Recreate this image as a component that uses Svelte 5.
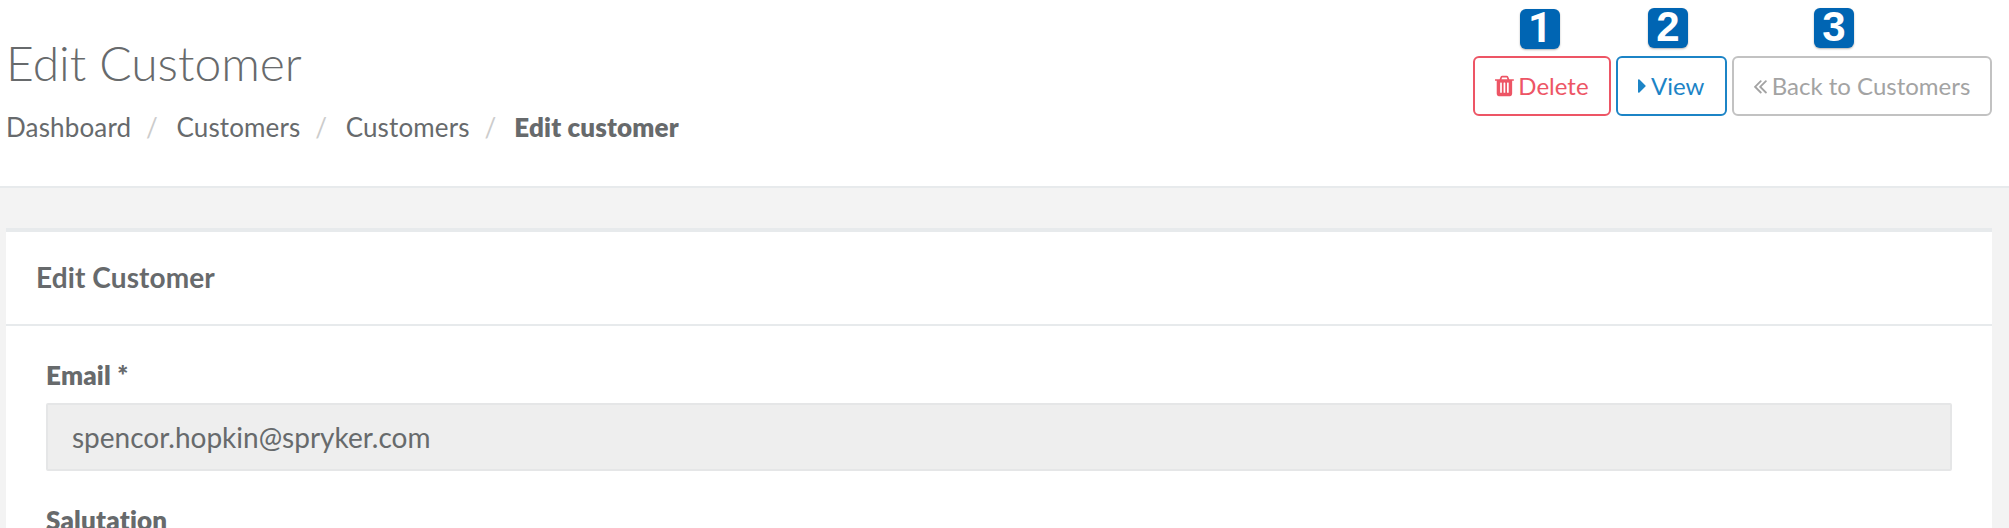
<script>
  const crumbs = ['Dashboard', 'Customers', 'Customers'];
  const actions = [
    {
      kind: 'danger', label: 'Delete', step: 1, box: '192 0 1408 1792', width: 18.86,
      path: 'M704 1376v-704q0-14-9-23t-23-9h-64q-14 0-23 9t-9 23v704q0 14 9 23t23 9h64q14 0 23-9t9-23zm256 0v-704q0-14-9-23t-23-9h-64q-14 0-23 9t-9 23v704q0 14 9 23t23 9h64q14 0 23-9t9-23zm256 0v-704q0-14-9-23t-23-9h-64q-14 0-23 9t-9 23v704q0 14 9 23t23 9h64q14 0 23-9t9-23zm-544-992h448l-48-117q-7-9-17-11h-317q-10 2-17 11zm928 32v64q0 14-9 23t-23 9h-96v948q0 83-47 143.500t-113 60.500h-832q-66 0-113-58.500t-47-141.500v-952h-96q-14 0-23-9t-9-23v-64q0-14 9-23t23-9h309l70-167q15-37 54-63t79-26h320q40 0 79 26t54 63l70 167h309q14 0 23 9t9 23z'
    },
    {
      kind: 'view', label: 'View', step: 2, box: '576 0 640 1792', width: 8.57,
      path: 'M1152 896q0 26-19 45l-448 448q-19 19-45 19t-45-19-19-45v-896q0-26 19-45t45-19 45 19l448 448q19 19 19 45z'
    },
    {
      kind: 'back', label: 'Back to Customers', step: 3, box: '429 0 1024 1792', width: 13.71,
      path: 'M1011 1376q0 13-10 23l-50 50q-10 10-23 10t-23-10l-466-466q-10-10-10-23t10-23l466-466q10-10 23-10t23 10l50 50q10 10 10 23t-10 23l-393 393 393 393q10 10 10 23zm384 0q0 13-10 23l-50 50q-10 10-23 10t-23-10l-466-466q-10-10-10-23t10-23l466-466q10-10 23-10t23 10l50 50q10 10 10 23t-10 23l-393 393 393 393q10 10 10 23z'
    }
  ];
</script>

<div class="page">
  <header>
    <div class="heading">
      <h1>Edit Customer</h1>
      <nav>
        {#each crumbs as crumb}<span>{crumb}</span><i>/</i>{/each}<strong>Edit customer</strong>
      </nav>
    </div>
    <div class="actions">
      {#each actions as a}
        <a class="btn {a.kind}">
          <svg viewBox={a.box} width={a.width} height="24" fill="currentColor"><path d={a.path} /></svg>
          <span>{a.label}</span>
          <b class="step">{a.step}</b>
        </a>
      {/each}
    </div>
  </header>

  <section>
    <h2>Edit Customer</h2>
    <div class="form">
      <label for="email">Email *</label>
      <input id="email" value="spencor.hopkin@spryker.com" readonly />
      <label for="salutation">Salutation</label>
    </div>
  </section>
</div>

<style>
  :global(body) { margin: 0; background: #f3f3f4; overflow: hidden; }
  * { box-sizing: border-box; }
  .page {
    height: 528px;
    overflow: hidden;
    background: #f3f3f3;
    color: #676a6c;
    font-family: Lato, sans-serif;
    font-size: 26px;
    font-variant-ligatures: none;
  }
  header {
    display: flex;
    justify-content: space-between;
    align-items: flex-start;
    height: 188px;
    padding: 36px 17px 0 6px;
    background: #fff;
    border-bottom: 2px solid #e7eaec;
  }
  h1 { margin: 0 0 18px; font-size: 48px; line-height: 54px; font-weight: 300; }
  nav { display: flex; line-height: 38px; white-space: pre; letter-spacing: 0.15px; }
  nav i { font-style: normal; color: #ccc; margin: 0 18.5px 0 14.8px; }
  nav strong { font-weight: 800; letter-spacing: 0.15px; margin-left: -0.6px; }
  .actions { display: flex; gap: 5px; padding-top: 20px; }
  .btn {
    position: relative;
    display: flex;
    align-items: center;
    height: 60px;
    padding: 0 20px;
    border: 2px solid;
    border-radius: 6px;
    font-size: 24px;
    line-height: 56px;
    white-space: nowrap;
  }
  .btn svg { flex: none; margin-right: 4.5px; }
  .btn.back svg { margin-right: 4px; }
  .danger { color: #ed5565; width: 138px; }
  .view { color: #1c84c6; width: 111px; }
  .back { color: #a3a3a3; border-color: #c2c2c2; width: 260px; }
  .step {
    position: absolute;
    left: 45px;
    top: -49px;
    width: 40px;
    height: 40px;
    border-radius: 6px;
    background: #0065b3;
    box-shadow: 0 1px 2px rgba(0, 0, 0, .3);
    color: #fff;
    font: bold 42px/38px "Liberation Sans", sans-serif;
    text-align: center;
  }
  .danger .step { font-family: Roboto, sans-serif; }
  .view .step { left: 30px; top: -50px; }
  .back .step { left: 80px; top: -50px; }
  section { margin: 40px 17px 0 6px; background: #fff; border-top: 4px solid #e7eaec; }
  h2 {
    margin: 0;
    height: 94px;
    padding-left: 30px;
    border-bottom: 2px solid #e7eaec;
    font-size: 28px;
    line-height: 91px;
    font-weight: 700;
    letter-spacing: 0.1px;
  }
  .form { display: flex; flex-direction: column; height: 230px; padding: 30px 40px 0; }
  label { line-height: 38px; font-weight: 800; letter-spacing: 0.2px; }
  input {
    height: 68px;
    margin: 9px 0 30px;
    padding: 0 24px;
    border: 2px solid #e5e6e7;
    border-radius: 2px;
    background: #eee;
    color: inherit;
    font: 28px Lato, sans-serif;
  }
</style>
